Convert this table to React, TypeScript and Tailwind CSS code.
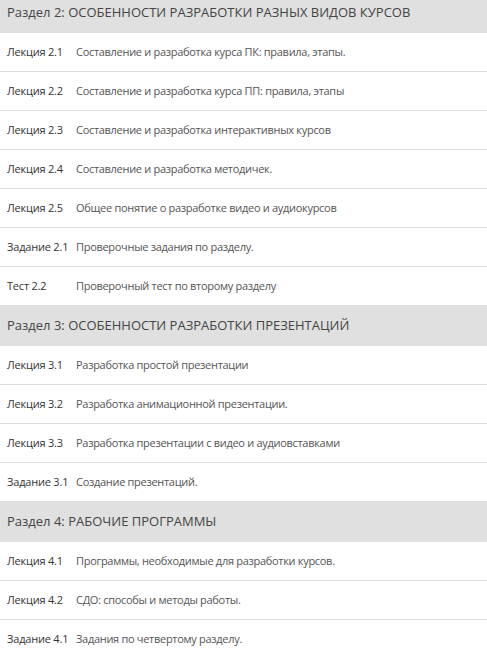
type Item = { label: string; title: string };

type Section = { title: string; items: Item[] };

const sections: Section[] = [
  {
    title: 'Раздел 2: ОСОБЕННОСТИ РАЗРАБОТКИ РАЗНЫХ ВИДОВ КУРСОВ',
    items: [
      { label: 'Лекция 2.1', title: 'Составление и разработка курса ПК: правила, этапы.' },
      { label: 'Лекция 2.2', title: 'Составление и разработка курса ПП: правила, этапы' },
      { label: 'Лекция 2.3', title: 'Составление и разработка интерактивных курсов' },
      { label: 'Лекция 2.4', title: 'Составление и разработка методичек.' },
      { label: 'Лекция 2.5', title: 'Общее понятие о разработке видео и аудиокурсов' },
      { label: 'Задание 2.1', title: 'Проверочные задания по разделу.' },
      { label: 'Тест 2.2', title: 'Проверочный тест по второму разделу' },
    ],
  },
  {
    title: 'Раздел 3: ОСОБЕННОСТИ РАЗРАБОТКИ ПРЕЗЕНТАЦИЙ',
    items: [
      { label: 'Лекция 3.1', title: 'Разработка простой презентации' },
      { label: 'Лекция 3.2', title: 'Разработка анимационной презентации.' },
      { label: 'Лекция 3.3', title: 'Разработка презентации с видео и аудиовставками' },
      { label: 'Задание 3.1', title: 'Создание презентаций.' },
    ],
  },
  {
    title: 'Раздел 4: РАБОЧИЕ ПРОГРАММЫ',
    items: [
      { label: 'Лекция 4.1', title: 'Программы, необходимые для разработки курсов.' },
      { label: 'Лекция 4.2', title: 'СДО: способы и методы работы.' },
      { label: 'Задание 4.1', title: 'Задания по четвертому разделу.' },
    ],
  },
];

export default function App() {
  return (
    <div className="w-[487px] h-[654px] overflow-hidden bg-white font-['Open_Sans',sans-serif]">
      <div className="-mt-[7px]">
        {sections.map((section) => (
          <div key={section.title}>
            <div className="h-[40px] flex items-center px-[7px] bg-[#e0e0e0] text-[13px] text-[#444]">
              {section.title}
            </div>
            {section.items.map((item) => (
              <div
                key={item.label}
                className="h-[39px] flex items-center px-[7px] border-b border-[#dedede] text-[11px]"
              >
                <span className="w-[69px] shrink-0 text-[#333] tracking-[-0.2px]">{item.label}</span>
                <span className="text-[#555] tracking-[-0.3px]">{item.title}</span>
              </div>
            ))}
          </div>
        ))}
      </div>
    </div>
  );
}
